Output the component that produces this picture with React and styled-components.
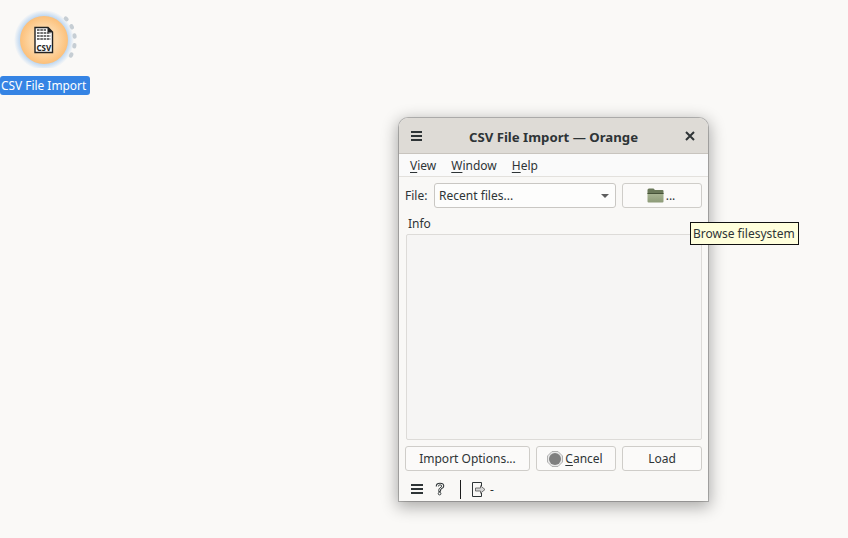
import React from 'react';
import styled, { createGlobalStyle } from 'styled-components';

const GlobalStyle = createGlobalStyle`
  html, body {
    margin: 0;
    padding: 0;
    width: 848px;
    height: 538px;
    overflow: hidden;
    background: #faf9f7;
    font-family: "Noto Sans", sans-serif;
    font-size: 12px;
    color: #2e3436;
  }
`;

const Canvas = styled.div`
  position: relative;
  width: 848px;
  height: 538px;
  overflow: hidden;
`;

const Node = styled.div`
  position: absolute;
  left: 0;
  top: 0;
  width: 90px;
  display: flex;
  flex-direction: column;
  align-items: flex-start;
`;

const NodeIcon = styled.svg`
  display: block;
  margin-top: 8px;
`;

const NodeLabel = styled.div`
  margin-top: 8px;
  background: #3584e4;
  color: #fff;
  height: 19px;
  line-height: 19px;
  padding: 0 4px 0 1px;
  border-radius: 3px;
  font-size: 11.9px;
  white-space: nowrap;
`;

const Win = styled.div`
  position: absolute;
  left: 399px;
  top: 118px;
  width: 309px;
  height: 383px;
  box-sizing: border-box;
  display: flex;
  flex-direction: column;
  background: #f9f8f6;
  border-radius: 9px 9px 0 0;
  box-shadow: 0 0 0 1px rgba(0, 0, 0, 0.22), 0 4px 16px 2px rgba(0, 0, 0, 0.32);
`;

const TitleBar = styled.div`
  height: 35px;
  flex: none;
  display: flex;
  align-items: center;
  justify-content: space-between;
  padding: 0 13px 0 12px;
  background: #dedbd6;
  border-bottom: 1px solid #c8c4be;
  border-radius: 9px 9px 0 0;
`;

const Title = styled.div`
  font-weight: 700;
  font-size: 13.2px;
  color: #2e3436;
  margin-top: 2px;
`;

const MenuBar = styled.div`
  height: 22px;
  flex: none;
  display: flex;
  align-items: center;
  gap: 15px;
  padding: 0 11px;
  border-bottom: 1px solid #e3e1dd;
  background: #fafafa;
`;

const MenuItem = styled.span`
  font-size: 12px;
  color: #2e3436;
  u {
    text-underline-offset: 2px;
  }
`;

const Body = styled.div`
  flex: 1;
  display: flex;
  flex-direction: column;
  padding: 6px 6px 0 7px;
`;

const FileRow = styled.div`
  display: flex;
  align-items: center;
  height: 25px;
`;

const FileLabel = styled.span`
  width: 29px;
  margin-left: -1px;
  flex: none;
  font-size: 12px;
`;

const Combo = styled.div`
  width: 182px;
  height: 25px;
  box-sizing: border-box;
  display: flex;
  align-items: center;
  justify-content: space-between;
  padding: 0 6px 0 4px;
  background: #fdfdfc;
  border: 1px solid #c9c7c3;
  border-radius: 3px;
  font-size: 12px;
`;

const Caret = styled.span`
  width: 0;
  height: 0;
  border-left: 4px solid transparent;
  border-right: 4px solid transparent;
  border-top: 4px solid #5e5e5e;
`;

const Button = styled.div`
  box-sizing: border-box;
  height: 25px;
  width: ${(p) => p.$width || 80}px;
  display: flex;
  align-items: center;
  justify-content: center;
  gap: ${(p) => p.$gap || 0}px;
  padding-right: ${(p) => p.$shift || 0}px;
  background: #fbfaf9;
  border: 1px solid #cfcdc9;
  border-radius: 3px;
  font-size: 12px;
  color: #2e3436;
  u {
    text-underline-offset: 2px;
  }
`;

const BrowseButton = styled(Button)`
  margin-left: 6px;
`;

const InfoLabel = styled.div`
  margin: 8px 0 2px 2px;
  height: 16px;
  line-height: 16px;
  font-size: 12px;
`;

const InfoBox = styled.div`
  height: 206px;
  box-sizing: border-box;
  background: #f6f5f4;
  border: 1px solid #dddbd8;
  border-radius: 2px;
`;

const ButtonRow = styled.div`
  display: flex;
  justify-content: space-between;
  margin: 6px 0 0 -1px;
`;

const StatusBar = styled.div`
  display: flex;
  align-items: center;
  height: 20px;
  margin-top: 8px;
  padding-left: 5px;
  font-size: 12px;
`;

const StatusGap = styled.span`
  width: ${(p) => p.$width}px;
`;

const Divider = styled.span`
  width: 1px;
  height: 19px;
  background: #1c1c1c;
  margin: 0 11px 0 15px;
`;

const Tooltip = styled.div`
  position: absolute;
  left: 690px;
  top: 222px;
  width: 109px;
  height: 23px;
  box-sizing: border-box;
  line-height: 21px;
  padding-left: 2px;
  background: #ffffdc;
  border: 1px solid #111;
  color: #2e3436;
  white-space: nowrap;
`;

const Hamburger = ({ size = 11 }) => (
  <svg width={size} height="10" viewBox={`0 0 ${size} 10`}>
    <rect y="0" width={size} height="2" fill="#2e3436" />
    <rect y="4" width={size} height="2" fill="#2e3436" />
    <rect y="8" width={size} height="2" fill="#2e3436" />
  </svg>
);

const Close = () => (
  <svg width="10" height="10" viewBox="0 0 10 10">
    <path d="M1 1 L9 9 M9 1 L1 9" stroke="#2e3436" strokeWidth="2" />
  </svg>
);

const Folder = () => (
  <svg width="17" height="15" viewBox="0 0 17 15">
    <defs>
      <linearGradient id="folderFront" x1="0" y1="0" x2="0" y2="1">
        <stop offset="0%" stopColor="#a9b594" />
        <stop offset="100%" stopColor="#8d9b78" />
      </linearGradient>
    </defs>
    <path d="M0.5 2 Q0.5 0.5 2 0.5 H6.5 L8 2 H15.5 Q16.5 2 16.5 3 V6 H0.5 Z" fill="#6a7859" />
    <path d="M0.5 5.5 H16.5 V13.5 Q16.5 14.5 15.5 14.5 H1.5 Q0.5 14.5 0.5 13.5 Z" fill="url(#folderFront)" />
    <rect x="0.5" y="5" width="16" height="1" fill="#465238" />
  </svg>
);

const Stop = () => (
  <svg width="16" height="16" viewBox="0 0 16 16">
    <path d="M5 0.5 H11 L15.5 5 V11 L11 15.5 H5 L0.5 11 V5 Z" fill="#e8e8e8" stroke="#b0b0b0" />
    <circle cx="8" cy="8" r="6" fill="#7f7f7f" />
  </svg>
);

const Help = () => (
  <svg width="10" height="14" viewBox="0 0 12 16" fill="none" stroke="#2e3436">
    <path d="M1.5 5 Q1.5 1 6 1 Q10.5 1 10.5 4.5 Q10.5 6.5 8 7.5 Q6.5 8.2 6.5 11" strokeWidth="1.3" />
    <path d="M4 5 Q4 3 6 3 Q8 3 8 4.5 Q8 5.8 6 6.5 Q4.4 7.2 4.4 11 H6.5" strokeWidth="1.1" />
    <circle cx="5.5" cy="13.5" r="1.6" strokeWidth="1.1" />
  </svg>
);

const Output = () => (
  <svg width="14" height="15" viewBox="0 0 14 15" fill="none">
    <path d="M9.5 4 V0.5 H0.5 V14.5 H9.5 V11" stroke="#2e3436" />
    <path d="M3.5 6 H8.5 V3.8 L13 7.5 L8.5 11.2 V9 H3.5 Z" fill="#d6d6d6" stroke="#555" strokeWidth="0.8" />
  </svg>
);

const CsvNode = () => (
  <NodeIcon width="78" height="60" viewBox="0 0 78 60">
    <defs>
      <radialGradient id="halo">
        <stop offset="76%" stopColor="#9cc4ee" stopOpacity="0.75" />
        <stop offset="100%" stopColor="#9cc4ee" stopOpacity="0" />
      </radialGradient>
      <radialGradient id="disc">
        <stop offset="55%" stopColor="#fdd7a6" />
        <stop offset="100%" stopColor="#fcc07a" />
      </radialGradient>
    </defs>
    <circle cx="44" cy="32" r="30" fill="url(#halo)" />
    <circle cx="44" cy="32" r="24" fill="url(#disc)" />
    <path
      d="M65.7 10.3 A31 31 0 0 1 66.3 53.7"
      fill="none"
      stroke="#c6ced4"
      strokeWidth="4"
      strokeLinecap="round"
      strokeDasharray="1.5 8.2"
    />
    <path d="M35 19.5 H48 L52.5 24 V44.5 H35 Z" fill="#fff" stroke="#222" strokeWidth="1.4" />
    <path d="M47.5 19 L53 24.5 H47.5 Z" fill="#222" />
    <path d="M37 22 H46 M37 25 H50.5 M37 28 H50.5 M37 31 H50.5" stroke="#444" strokeWidth="1.7" strokeDasharray="2.6 .7" />
    <text x="43.8" y="42.7" fontFamily="Noto Sans, sans-serif" fontSize="8" fontWeight="700" textAnchor="middle" fill="#222">CSV</text>
  </NodeIcon>
);

const App = () => (
  <Canvas>
    <GlobalStyle />
    <Node>
      <CsvNode />
      <NodeLabel>CSV File Import</NodeLabel>
    </Node>
    <Win>
      <TitleBar>
        <Hamburger />
        <Title>CSV File Import — Orange</Title>
        <Close />
      </TitleBar>
      <MenuBar>
        <MenuItem><u>V</u>iew</MenuItem>
        <MenuItem><u>W</u>indow</MenuItem>
        <MenuItem><u>H</u>elp</MenuItem>
      </MenuBar>
      <Body>
        <FileRow>
          <FileLabel>File:</FileLabel>
          <Combo>
            Recent files...
            <Caret />
          </Combo>
          <BrowseButton $gap={2} $shift={2}>
            <Folder />
            ...
          </BrowseButton>
        </FileRow>
        <InfoLabel>Info</InfoLabel>
        <InfoBox />
        <ButtonRow>
          <Button $width={125}>Import Options...</Button>
          <Button $width={80} $gap={2} $shift={2}>
            <Stop />
            <span><u>C</u>ancel</span>
          </Button>
          <Button $width={80}>Load</Button>
        </ButtonRow>
        <StatusBar>
          <Hamburger size={12} />
          <StatusGap $width={12} />
          <Help />
          <Divider />
          <Output />
          <StatusGap $width={4} />
          -
        </StatusBar>
      </Body>
    </Win>
    <Tooltip>Browse filesystem</Tooltip>
  </Canvas>
);

export default App;
